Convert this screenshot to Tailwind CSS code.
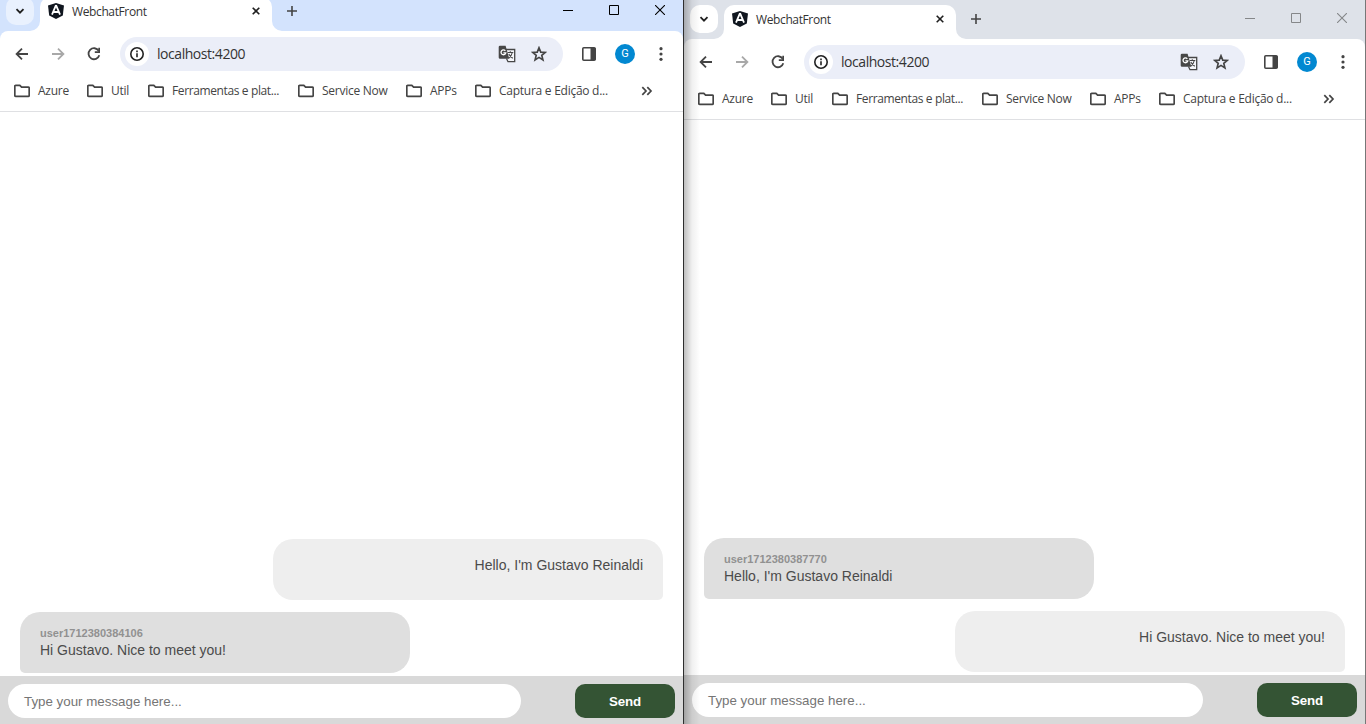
<!DOCTYPE html>
<html lang="pt-BR">
<head>
<meta charset="utf-8">
<title>WebchatFront</title>
<script src="https://cdn.jsdelivr.net/npm/@tailwindcss/browser@4"></script>
</head>
<body class="h-[724px] w-[1366px] overflow-hidden bg-white font-['Open_Sans',sans-serif] text-[#1f1f1f]">
<svg class="hidden">
  <symbol id="down" viewBox="0 0 10 10"><path d="M1.500 3.200 5 6.700 8.500 3.200" fill="none" stroke="currentColor" stroke-width="1.8"/></symbol>
  <symbol id="angular" viewBox="0 0 16 16"><path d="M8 0 16 2.600 14.800 12.500 8 16 1.200 12.500 0 2.600Z" fill="#10161f"/><path d="M8 2.200 4 11.700M8 2.200 12 11.700M5.500 9H10.500" fill="none" stroke="#fff" stroke-width="1.8"/></symbol>
  <symbol id="x" viewBox="0 0 8 8"><path d="M.7.700 7.300 7.300M7.300.700.700 7.300" stroke="currentColor" stroke-width="1.6"/></symbol>
  <symbol id="plus" viewBox="0 0 10 10"><path d="M5 0V10M0 5H10" stroke="currentColor" stroke-width="1.600"/></symbol>
  <symbol id="min" viewBox="0 0 10 10"><path d="M0 5.500H10" stroke="currentColor"/></symbol>
  <symbol id="max" viewBox="0 0 10 10"><path d="M.5.500H9.500V9.500H.500Z" fill="none" stroke="currentColor"/></symbol>
  <symbol id="close" viewBox="0 0 10 10"><path d="M0 0 10 10M10 0 0 10" stroke="currentColor" stroke-width="1.1"/></symbol>
  <symbol id="back" viewBox="0 0 16 16"><path d="M14 8H3M8 2.600 2.600 8 8 13.400" fill="none" stroke="currentColor" stroke-width="1.8"/></symbol>
  <symbol id="reload" viewBox="0 0 16 16"><path d="M12.700 4.800A5.500 5.500 0 1 0 13.300 9.300" fill="none" stroke="currentColor" stroke-width="1.8"/><path d="M14 1.800V7H8.800V5.300H12.300V1.800Z" fill="currentColor"/></symbol>
  <symbol id="info" viewBox="0 0 16 16"><circle cx="8" cy="8" r="6.200" fill="none" stroke="currentColor" stroke-width="1.600"/><path d="M8 7.200V11.300M8 4.600V6.200" stroke="currentColor" stroke-width="1.600"/></symbol>
  <symbol id="translate" viewBox="0 0 18 18"><path d="M7.500 4.500H16.700V16.700H10L8.500 13.500" fill="#f6f7fb" stroke="#474747" stroke-width="1.300"/><path d="M2 .7H7.600L11.300 13.800H2A1.300 1.300 0 0 1 .7 12.500V2A1.300 1.300 0 0 1 2 .7Z" fill="#474747"/><path d="M7.300 5.800A2.400 2.400 0 1 0 7.800 7.800H5.400" fill="none" stroke="#fff" stroke-width="1.300"/><path d="M9.600 7.500H15.300M12.300 6.200V7.500M14.300 7.500C13.800 10 12.300 11.800 10.800 13M10.800 9C11.800 11 13.300 12.300 14.800 13.300" fill="none" stroke="#474747" stroke-width="1.100"/></symbol>
  <symbol id="star" viewBox="0 0 16 16"><path d="M8 1.800 9.750 6.100 14.300 6.400 10.800 9.350 11.900 13.900 8 11.400 4.100 13.900 5.200 9.350 1.700 6.400 6.250 6.100Z" fill="none" stroke="currentColor" stroke-width="1.700"/></symbol>
  <symbol id="panel" viewBox="0 0 14 14"><rect x=".8" y=".8" width="12.400" height="12.400" rx="1" fill="none" stroke="currentColor" stroke-width="1.600"/><path d="M8.500 1H13.500V13H8.500Z" fill="currentColor"/></symbol>
  <symbol id="dots" viewBox="0 0 4 16"><circle cx="2" cy="2.700" r="1.600"/><circle cx="2" cy="8" r="1.600"/><circle cx="2" cy="13.300" r="1.600"/></symbol>
  <symbol id="folder" viewBox="0 0 16 14"><path d="M.8 2.300Q.8 1.400 1.700 1.400H5.800L7.600 3.200H14.300Q15.200 3.200 15.200 4.100V11.400Q15.200 12.300 14.300 12.300H1.700Q.8 12.300.8 11.400Z" fill="none" stroke="currentColor" stroke-width="1.700"/></symbol>
  <symbol id="more" viewBox="0 0 12 10"><path d="M1.300 1.200 5 5 1.300 8.800M6.300 1.200 10 5 6.300 8.800" fill="none" stroke="currentColor" stroke-width="1.700"/></symbol>
  <symbol id="flareL" viewBox="0 0 10 10"><path d="M10 0V10H0A10 10 0 0 0 10 0Z" fill="#fff"/></symbol>
  <symbol id="flareR" viewBox="0 0 10 10"><path d="M0 0V10H10A10 10 0 0 1 0 0Z" fill="#fff"/></symbol>
</svg>
<main class="flex h-[724px] items-end overflow-hidden">

<section class="flex h-[732px] w-[684px] shrink-0 flex-col border-r border-[#2e2e2e] bg-white">
  <header class="flex h-[39px] shrink-0 bg-[#d3e3fd] pl-[6px] pt-[5px]">
    <div class="grid size-7 place-items-center rounded-[10px] bg-[#e9f1fe]"><svg class="size-[10px]"><use href="#down"/></svg></div>
    <div class="relative ml-[6px] flex h-[34px] w-[232px] rounded-t-[10px] bg-white pl-2">
      <svg class="absolute -left-[10px] bottom-0 size-[10px]"><use href="#flareL"/></svg>
      <svg class="absolute -right-[10px] bottom-0 size-[10px]"><use href="#flareR"/></svg>
      <svg class="mt-[6px] size-4"><use href="#angular"/></svg>
      <span class="ml-2 mt-[6px] w-[180px] whitespace-nowrap text-[12px] leading-[18px] tracking-[-0.38px] text-[#333]">WebchatFront</span>
      <svg class="mt-[10px] size-2 shrink-0"><use href="#x"/></svg>
    </div>
    <svg class="ml-[15px] mt-[9px] size-[10px] text-[#444]"><use href="#plus"/></svg>
    <div class="ml-auto flex gap-9 pr-[18px] pt-2 text-black"><svg class="size-[10px]"><use href="#min"/></svg><svg class="size-[10px]"><use href="#max"/></svg><svg class="size-[10px]"><use href="#close"/></svg></div>
  </header>
  <div class="h-[81px] shrink-0 border-b border-[#dfe0e3] bg-[#d3e3fd]">
    <div class="h-20 rounded-t-[8px] bg-white pt-[6px]">
      <div class="flex h-[34px] items-center pl-[14px] pr-5 text-[#444]">
        <svg class="size-4"><use href="#back"/></svg>
        <svg class="ml-5 size-4 rotate-180 text-[#a8a8a8]"><use href="#back"/></svg>
        <svg class="ml-5 size-4"><use href="#reload"/></svg>
        <div class="ml-[18px] flex h-[34px] grow items-center rounded-full bg-[#ebeef8] pl-[5px] pr-4 text-[#444]">
          <span class="grid size-6 place-items-center rounded-full bg-white text-[#222]"><svg class="size-4"><use href="#info"/></svg></span>
          <span class="ml-2 whitespace-nowrap text-[14px] leading-5 tracking-[-0.45px] text-[#333]">localhost:4200</span>
          <svg class="ml-auto size-[18px]"><use href="#translate"/></svg>
          <svg class="ml-[15px] size-4"><use href="#star"/></svg>
        </div>
        <svg class="ml-[19px] size-[14px]"><use href="#panel"/></svg>
        <span class="ml-[19px] grid size-5 place-items-center rounded-full bg-[#0288d1] font-[Roboto] text-[11px] text-white">G</span>
        <svg class="ml-6 h-4 w-1 fill-[#444]"><use href="#dots"/></svg>
      </div>
      <div class="flex h-10 items-center whitespace-nowrap pl-[14px] text-[12px] leading-4 tracking-[-0.26px] text-[#444]">
        <div class="flex w-[73px] items-center gap-2"><svg class="h-[14px] w-4"><use href="#folder"/></svg><span>Azure</span></div>
        <div class="flex w-[61px] items-center gap-2"><svg class="h-[14px] w-4"><use href="#folder"/></svg><span>Util</span></div>
        <div class="flex w-[150px] items-center gap-2"><svg class="h-[14px] w-4"><use href="#folder"/></svg><span class="tracking-[-0.38px]">Ferramentas e plat...</span></div>
        <div class="flex w-[108px] items-center gap-2"><svg class="h-[14px] w-4"><use href="#folder"/></svg><span>Service Now</span></div>
        <div class="flex w-[69px] items-center gap-2"><svg class="h-[14px] w-4"><use href="#folder"/></svg><span>APPs</span></div>
        <div class="flex items-center gap-2"><svg class="h-[14px] w-4"><use href="#folder"/></svg><span>Captura e Edição d...</span></div>
        <svg class="ml-auto mr-[30px] h-[10px] w-3"><use href="#more"/></svg>
      </div>
    </div>
  </div>
  <div class="flex grow flex-col justify-end gap-3 px-5 pb-[3px] font-['Liberation_Sans',Arial,sans-serif] text-[14px] text-[#4b4b4b]">
    <div class="h-[61px] w-[390px] self-end rounded-[20px] rounded-br-[5px] bg-[#eee] px-5 pt-[18px] text-right leading-4">Hello, I'm Gustavo Reinaldi</div>
    <div class="h-[61px] w-[390px] rounded-[20px] rounded-bl-[5px] bg-[#dfdfdf] px-5 pt-[15px]"><div class="text-[11px] font-bold leading-[13px] text-[#919191]">user1712380384106</div><div class="mt-[2px] leading-4">Hi Gustavo. Nice to meet you!</div></div>
  </div>
  <footer class="flex h-12 shrink-0 justify-between bg-[#d9d9d9] px-2 pt-2 font-['Liberation_Sans',Arial,sans-serif] text-[13.333px]">
    <div class="h-[34px] w-[513px] rounded-full bg-white px-4 leading-[36px] text-[#757575]">Type your message here...</div>
    <button class="h-[34px] w-[100px] rounded-[10px] bg-[#345434] pt-[2px] text-[13.333px] font-bold tracking-[-0.2px] text-white">Send</button>
  </footer>
</section>

<section class="relative flex h-[724px] w-[682px] shrink-0 flex-col border-r border-[#777] bg-white">
  <header class="flex h-[39px] shrink-0 bg-[#dee2e9] pl-[6px] pt-[5px]">
    <div class="grid size-7 place-items-center rounded-[10px] bg-white"><svg class="size-[10px]"><use href="#down"/></svg></div>
    <div class="relative ml-[6px] flex h-[34px] w-[232px] rounded-t-[10px] bg-white pl-2">
      <svg class="absolute -left-[10px] bottom-0 size-[10px]"><use href="#flareL"/></svg>
      <svg class="absolute -right-[10px] bottom-0 size-[10px]"><use href="#flareR"/></svg>
      <svg class="mt-[6px] size-4"><use href="#angular"/></svg>
      <span class="ml-2 mt-[6px] w-[180px] whitespace-nowrap text-[12px] leading-[18px] tracking-[-0.38px] text-[#333]">WebchatFront</span>
      <svg class="mt-[10px] size-2 shrink-0"><use href="#x"/></svg>
    </div>
    <svg class="ml-[15px] mt-[9px] size-[10px] text-[#444]"><use href="#plus"/></svg>
    <div class="ml-auto flex gap-9 pr-[18px] pt-2 text-[#858789]"><svg class="size-[10px]"><use href="#min"/></svg><svg class="size-[10px]"><use href="#max"/></svg><svg class="size-[10px]"><use href="#close"/></svg></div>
  </header>
  <div class="h-[81px] shrink-0 border-b border-[#dfe0e3] bg-[#dee2e9]">
    <div class="h-20 rounded-t-[8px] bg-white pt-[6px]">
      <div class="flex h-[34px] items-center pl-[14px] pr-5 text-[#444]">
        <svg class="size-4"><use href="#back"/></svg>
        <svg class="ml-5 size-4 rotate-180 text-[#a8a8a8]"><use href="#back"/></svg>
        <svg class="ml-5 size-4"><use href="#reload"/></svg>
        <div class="ml-[18px] flex h-[34px] grow items-center rounded-full bg-[#ebeef8] pl-[5px] pr-4 text-[#444]">
          <span class="grid size-6 place-items-center rounded-full bg-white text-[#222]"><svg class="size-4"><use href="#info"/></svg></span>
          <span class="ml-2 whitespace-nowrap text-[14px] leading-5 tracking-[-0.45px] text-[#333]">localhost:4200</span>
          <svg class="ml-auto size-[18px]"><use href="#translate"/></svg>
          <svg class="ml-[15px] size-4"><use href="#star"/></svg>
        </div>
        <svg class="ml-[19px] size-[14px]"><use href="#panel"/></svg>
        <span class="ml-[19px] grid size-5 place-items-center rounded-full bg-[#0288d1] font-[Roboto] text-[11px] text-white">G</span>
        <svg class="ml-6 h-4 w-1 fill-[#444]"><use href="#dots"/></svg>
      </div>
      <div class="flex h-10 items-center whitespace-nowrap pl-[14px] text-[12px] leading-4 tracking-[-0.26px] text-[#444]">
        <div class="flex w-[73px] items-center gap-2"><svg class="h-[14px] w-4"><use href="#folder"/></svg><span>Azure</span></div>
        <div class="flex w-[61px] items-center gap-2"><svg class="h-[14px] w-4"><use href="#folder"/></svg><span>Util</span></div>
        <div class="flex w-[150px] items-center gap-2"><svg class="h-[14px] w-4"><use href="#folder"/></svg><span class="tracking-[-0.38px]">Ferramentas e plat...</span></div>
        <div class="flex w-[108px] items-center gap-2"><svg class="h-[14px] w-4"><use href="#folder"/></svg><span>Service Now</span></div>
        <div class="flex w-[69px] items-center gap-2"><svg class="h-[14px] w-4"><use href="#folder"/></svg><span>APPs</span></div>
        <div class="flex items-center gap-2"><svg class="h-[14px] w-4"><use href="#folder"/></svg><span>Captura e Edição d...</span></div>
        <svg class="ml-auto mr-[30px] h-[10px] w-3"><use href="#more"/></svg>
      </div>
    </div>
  </div>
  <div class="flex grow flex-col justify-end gap-3 px-5 pb-[3px] font-['Liberation_Sans',Arial,sans-serif] text-[14px] text-[#4b4b4b]">
    <div class="h-[61px] w-[390px] rounded-[20px] rounded-bl-[5px] bg-[#dfdfdf] px-5 pt-[15px]"><div class="text-[11px] font-bold leading-[13px] text-[#919191]">user1712380387770</div><div class="mt-[2px] leading-4">Hello, I'm Gustavo Reinaldi</div></div>
    <div class="h-[61px] w-[390px] self-end rounded-[20px] rounded-br-[5px] bg-[#eee] px-5 pt-[18px] text-right leading-4">Hi Gustavo. Nice to meet you!</div>
  </div>
  <footer class="flex h-[49px] shrink-0 justify-between bg-[#d9d9d9] px-2 pt-2 font-['Liberation_Sans',Arial,sans-serif] text-[13.333px]">
    <div class="h-[34px] w-[511px] rounded-full bg-white px-4 leading-[36px] text-[#757575]">Type your message here...</div>
    <button class="h-[34px] w-[100px] rounded-[10px] bg-[#345434] pt-[2px] text-[13.333px] font-bold tracking-[-0.2px] text-white">Send</button>
  </footer>
  <div class="pointer-events-none absolute inset-y-0 left-0 w-4 bg-linear-to-r from-black/25 via-black/6 to-transparent"></div>
</section>
</main>
</body>
</html>
